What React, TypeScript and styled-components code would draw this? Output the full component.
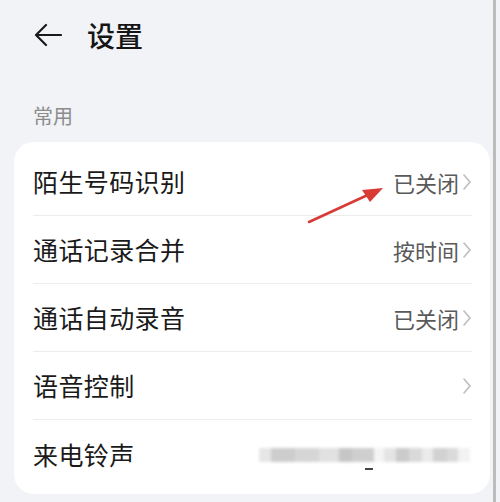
import React from "react";
import styled, { createGlobalStyle } from "styled-components";

const GlobalStyle = createGlobalStyle`
    html, body {
        margin: 0;
        padding: 0;
        background: #f1f3f6;
    }
    body {
        font-family: "Noto Sans CJK SC", "Noto Sans", sans-serif;
    }
`;

const Page = styled.div`
    position: relative;
    width: 500px;
    height: 502px;
    overflow: hidden;
    background: #f1f3f6;
    &::after {
        content: "";
        position: absolute;
        top: 0;
        bottom: 0;
        right: 4px;
        width: 3px;
        background: #bcbcbc;
    }
`;

const Header = styled.div`
    display: flex;
    align-items: center;
    height: 70px;
    padding-left: 34px;
    gap: 25px;
`;

const Title = styled.div`
    font-size: 28px;
    font-weight: 500;
    color: #151515;
    line-height: 1;
`;

const SectionLabel = styled.div`
    margin-top: 34px;
    padding-left: 33px;
    font-size: 20px;
    line-height: 24px;
    color: #8c8c8c;
`;

const Card = styled.div`
    margin: 14px 10px 0 14px;
    width: 476px;
    background: #ffffff;
    border-radius: 20px;
    padding: 6px 18px 5px 19px;
    box-sizing: border-box;
`;

const Row = styled.div<{ last?: boolean }>`
    position: relative;
    display: flex;
    align-items: center;
    justify-content: space-between;
    height: ${(p) => (p.last ? "69px" : "67px")};
    border-bottom: ${(p) => (p.last ? "none" : "1px solid #ececec")};
`;

const Label = styled.div`
    font-size: 25px;
    color: #1a1a1a;
    line-height: 1;
    letter-spacing: 0.4px;
`;

const Right = styled.div`
    display: flex;
    align-items: center;
    gap: 3px;
`;

const Value = styled.div`
    font-size: 22px;
    color: #5a5a5a;
    line-height: 1;
`;

const Blur = styled.div`
    display: flex;
    align-items: center;
    height: 22px;
    margin-right: 2px;
    filter: blur(1.5px);
`;

const Block = styled.div<{ w: number; shade: string }>`
    width: ${(p) => p.w}px;
    height: 14px;
    background: ${(p) => p.shade};
`;

const Dash = styled.div`
    position: absolute;
    left: 332px;
    top: 48px;
    width: 8px;
    height: 2px;
    background: #444;
    filter: blur(0.4px);
`;

const ArrowOverlay = styled.svg`
    position: absolute;
    left: 300px;
    top: 180px;
    width: 96px;
    height: 50px;
`;

const BackArrow = () => (
    <svg width="28" height="24" viewBox="0 0 28 24" fill="none">
        <path d="M12 2 L2 12 L12 22 M2 12 H27" stroke="#1a1a1a" strokeWidth="2.2" strokeLinecap="round" strokeLinejoin="round" />
    </svg>
);

const Chevron = () => (
    <svg width="10" height="18" viewBox="0 0 10 18" fill="none">
        <path d="M2 2 L8 9 L2 16" stroke="#bdbdbd" strokeWidth="1.6" strokeLinecap="round" strokeLinejoin="round" />
    </svg>
);

const blocks: [number, string][] = [
    [12, "#e6e6e6"],
    [24, "#cdcdcd"],
    [24, "#d6d6d6"],
    [20, "#e1e1e1"],
    [13, "#c6c6c6"],
    [22, "#cfcfcf"],
    [10, "#f4f4f4"],
    [12, "#e4e4e4"],
    [13, "#cbcbcb"],
    [13, "#d9d9d9"],
    [11, "#ebebeb"],
    [14, "#d2d2d2"],
    [11, "#dadada"],
    [12, "#f2f2f2"],
];

const rows = [
    { label: "陌生号码识别", value: "已关闭" },
    { label: "通话记录合并", value: "按时间" },
    { label: "通话自动录音", value: "已关闭" },
    { label: "语音控制", value: "" },
];

export default function App() {
    return (
        <Page>
            <GlobalStyle />
            <Header>
                <BackArrow />
                <Title>设置</Title>
            </Header>
            <SectionLabel>常用</SectionLabel>
            <Card>
                {rows.map((r) => (
                    <Row key={r.label}>
                        <Label>{r.label}</Label>
                        <Right>
                            {r.value && <Value>{r.value}</Value>}
                            <Chevron />
                        </Right>
                    </Row>
                ))}
                <Row last>
                    <Label>来电铃声</Label>
                    <Blur>
                        {blocks.map(([w, shade], i) => (
                            <Block key={i} w={w} shade={shade} />
                        ))}
                    </Blur>
                    <Dash />
                </Row>
            </Card>
            <ArrowOverlay viewBox="0 0 96 50">
                <line x1="9" y1="42" x2="72" y2="13" stroke="#d83a36" strokeWidth="2.6" strokeLinecap="round" />
                <polygon points="83,8 62,10 70,22" fill="#d83a36" />
            </ArrowOverlay>
        </Page>
    );
}
